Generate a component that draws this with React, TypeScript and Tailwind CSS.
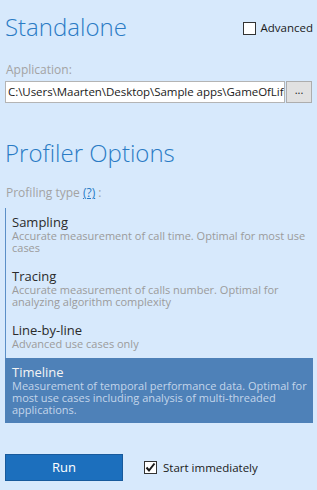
const items = [
  {
    title: "Sampling",
    desc: "Accurate measurement of call time. Optimal for most use cases",
  },
  {
    title: "Tracing",
    desc: "Accurate measurement of calls number. Optimal for analyzing algorithm complexity",
  },
  {
    title: "Line-by-line",
    desc: "Advanced use cases only",
  },
  {
    title: "Timeline",
    desc: "Measurement of temporal performance data. Optimal for most use cases including analysis of multi-threaded applications.",
  },
];

const selected = "Timeline";

const CheckBox = ({ checked }: { checked?: boolean }) => (
  <span className="flex h-[13px] w-[13px] flex-none items-center justify-center border border-[#333333] bg-white">
    {checked && (
      <svg width="11" height="11" viewBox="0 0 11 11">
        <path d="M1.5 5.5 L4 8.5 L9.5 1.5" fill="none" stroke="#1a1a1a" strokeWidth="2" />
      </svg>
    )}
  </span>
);

export default function App() {
  return (
    <div className="relative h-[490px] w-[317px] overflow-hidden bg-[#d7e9fc] font-['Open_Sans',sans-serif]">
      <div className="flex items-start justify-between pl-[5px] pr-[4px] pt-[10px]">
        <h1 className="text-[24px] font-light leading-[34px] text-[#2a7bc5]">Standalone</h1>
        <label className="mt-[11px] flex items-center gap-[5px] text-[11.5px] leading-[14px] text-[#1a1a1a]">
          <CheckBox />
          Advanced
        </label>
      </div>

      <div className="mt-[18px] px-[6px] text-[12px] leading-[16px] text-[#a3a3a3]">Application:</div>
      <div className="mt-[3px] flex px-[5px]">
        <div className="flex h-[22px] w-[280px] items-center overflow-hidden whitespace-nowrap border border-[#b4b4b4] bg-white pl-[2px] text-[11.5px] tracking-[-0.05px] text-[#1a1a1a]">
          C:\Users\Maarten\Desktop\Sample apps\GameOfLife
        </div>
        <button className="ml-[1px] flex h-[22px] flex-1 items-start justify-center border border-[#adadad] bg-[#e1e1e1] text-[11px] leading-[16px] text-[#1a1a1a]">
          ...
        </button>
      </div>

      <h2 className="mt-[33px] px-[5px] text-[24px] font-light leading-[34px] text-[#2a7bc5]">Profiler Options</h2>

      <div className="mt-[15px] px-[6px] text-[12px] leading-[16px] text-[#a3a3a3]">
        Profiling type <span className="text-[#2a7bc5] underline">(?)</span> :
      </div>

      <div className="ml-[5px] mr-[4px] mt-[7px] border-l border-[#5b8fc7]">
        {items.map((item) => {
          const active = item.title === selected;
          return (
            <div
              key={item.title}
              className={
                active
                  ? "-ml-px bg-[#4e81b8] pb-[7px] pl-[7px] pr-[2px] pt-[6px]"
                  : "pb-[8px] pl-[6px] pr-[2px] pt-[6px]"
              }
            >
              <div className={active ? "text-[13px] leading-[16px] text-[#f4f4f4]" : "text-[13px] leading-[16px] text-[#2b2b2b]"}>
                {item.title}
              </div>
              <div className={active ? "text-[11px] leading-[12px] text-[#c3d5ea]" : "text-[11px] leading-[12px] text-[#9b9b9b]"}>
                {item.desc}
              </div>
            </div>
          );
        })}
      </div>

      <div className="mt-[31px] flex items-center px-[5px]">
        <button className="h-[27px] w-[118px] border border-[#185a9c] bg-[#1c6fbd] text-[13px] text-white">Run</button>
        <label className="ml-[21px] flex items-center gap-[6px] text-[11.5px] text-[#1a1a1a]">
          <CheckBox checked />
          Start immediately
        </label>
      </div>
    </div>
  );
}
